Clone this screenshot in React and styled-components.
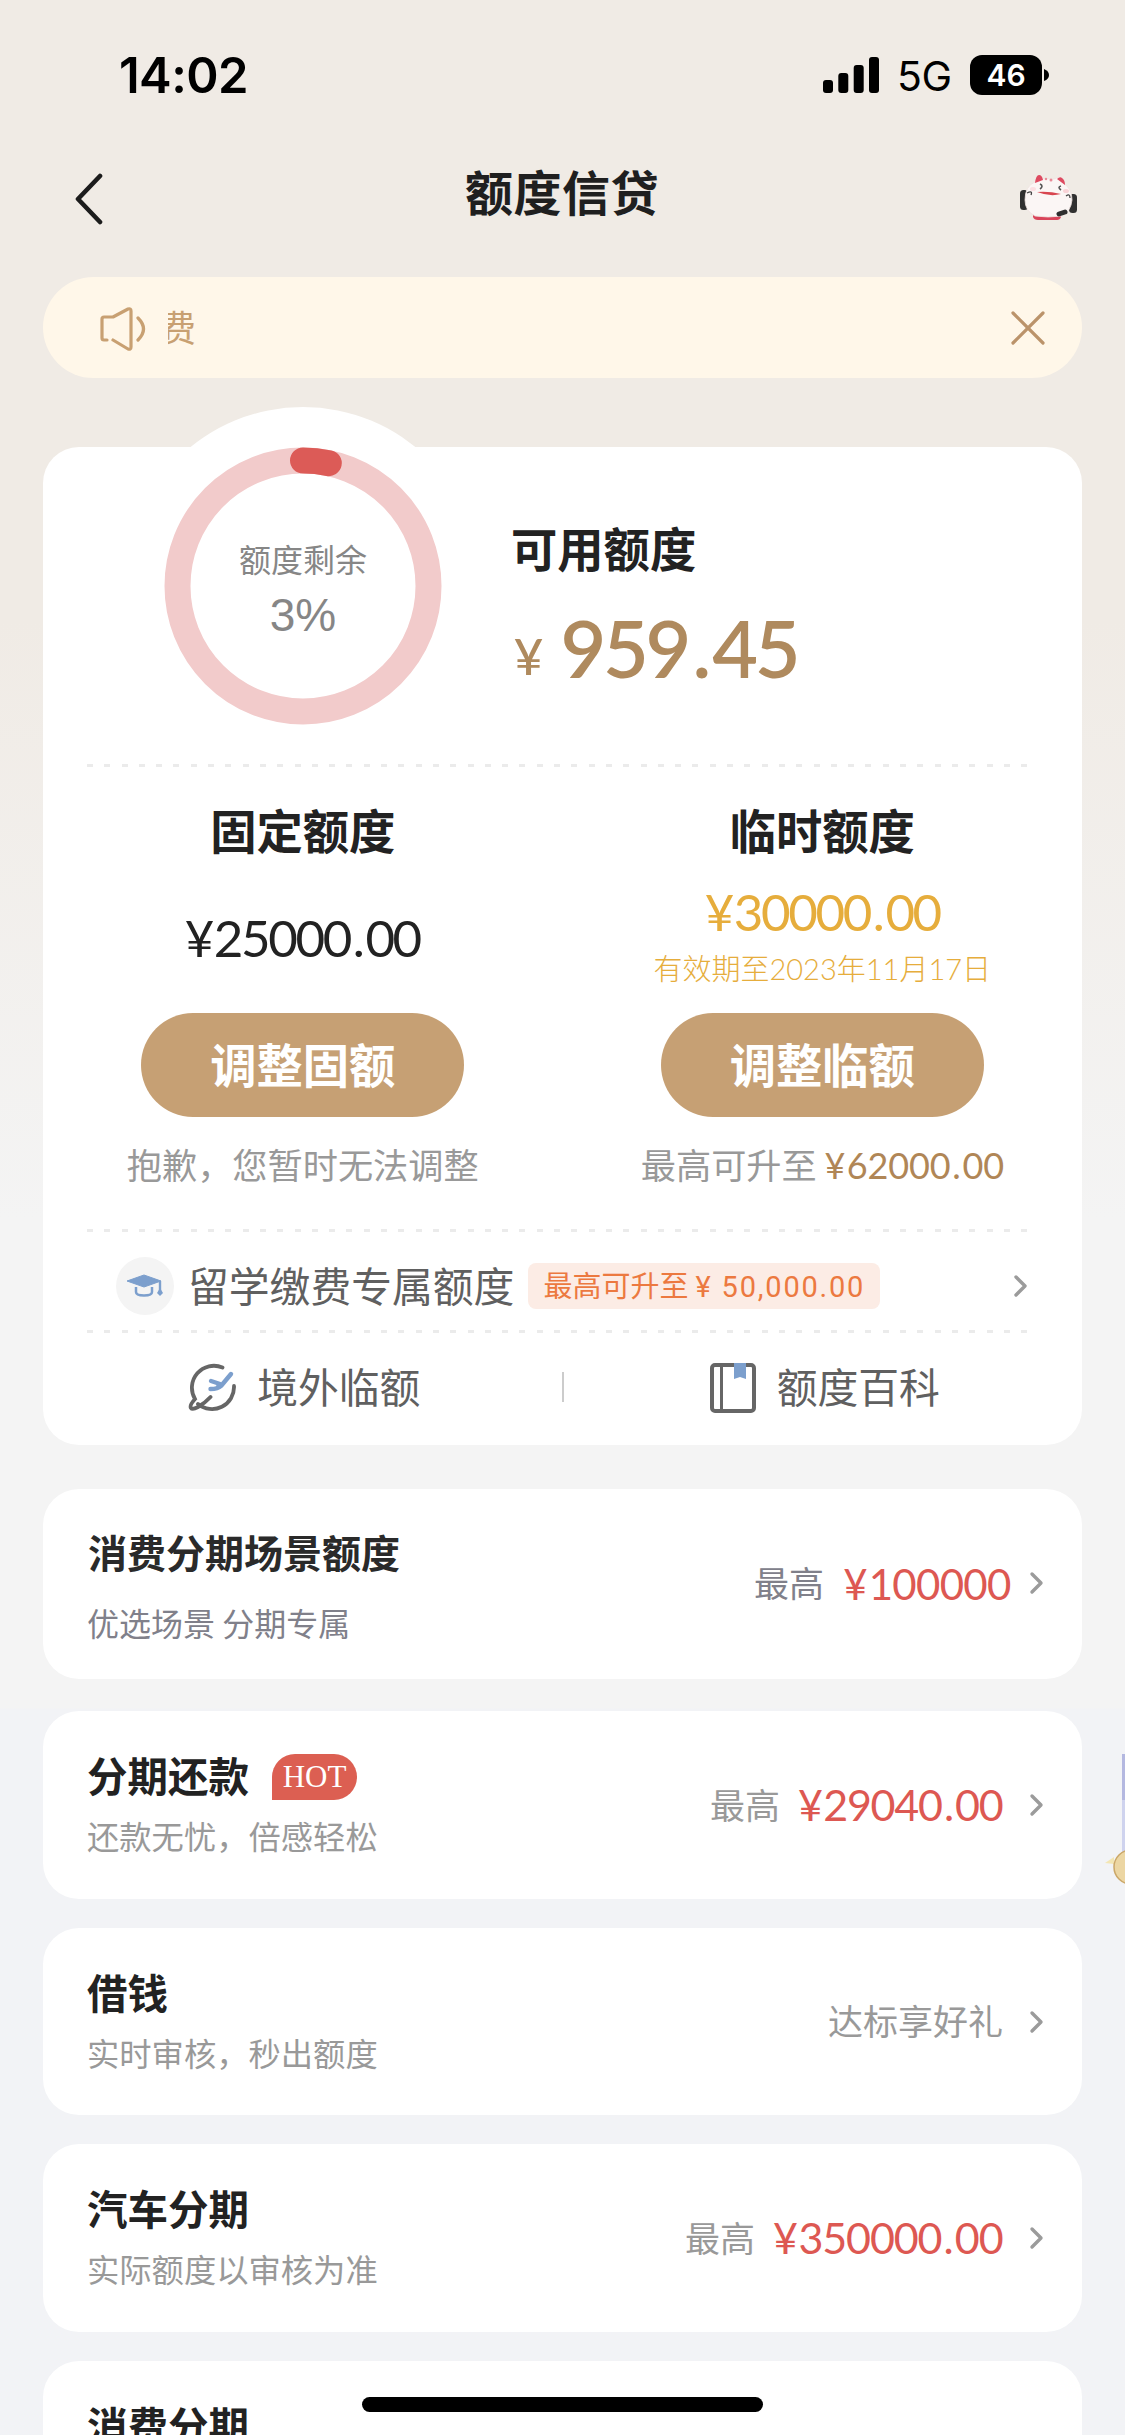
import React from 'react';
import styled, { createGlobalStyle } from 'styled-components';

const GlobalStyle = createGlobalStyle`
    * {
        box-sizing: border-box;
    }

    body {
        margin: 0;
        background: #f2f3f6;
        font-family: "Noto Sans CJK SC", sans-serif;
    }

    svg {
        display: block;
        flex-shrink: 0;
    }
`;

const offers = [
    { title: '分期还款', note: '还款无忧，倍感轻松', hot: true, prefix: '最高', amount: '¥29040.00', width: 206 },
    { title: '借钱', note: '实时审核，秒出额度', perk: '达标享好礼' },
    { title: '汽车分期', note: '实际额度以审核为准', prefix: '最高', amount: '¥350000.00', width: 231 },
    { title: '消费分期', note: '' },
];

const Chevron = () => (
    <svg width="16" height="24" viewBox="0 0 16 24" fill="none">
        <path d="M3 3 L12 12 L3 21" stroke="#9b9b9b" strokeWidth="3.4" strokeLinecap="round" strokeLinejoin="round" />
    </svg>
);

// Spreads the characters of an amount over a fixed width: digits take one cell,
// the currency sign a little more, the decimal point a little over half
const Figure = ({ children, width, size, weight = 400, color }) => {
    const cells = [...children].map((char) => (char === '¥' ? 1.14 : char === '.' ? 0.57 : 1));
    const unit = width / cells.reduce((a, b) => a + b, 0);
    let left = 0;
    const centers = cells.map((cell) => {
        left += cell * unit;
        return left - (cell * unit) / 2;
    });

    return (
        <svg width={width} height={size} overflow="visible">
            <text
                x={centers.join(' ')}
                y={size * 0.86}
                textAnchor="middle"
                fontFamily="Lato, sans-serif"
                fontSize={size}
                fontWeight={weight}
                fill={color}
            >
                {children}
            </text>
        </svg>
    );
};

const Mascot = () => (
    <svg width="60" height="50" viewBox="0 0 60 50">
        <rect x="0" y="16" width="8" height="20" rx="3.500" fill="#303030" />
        <rect x="49" y="20" width="8" height="19" rx="3.500" fill="#303030" />
        <path d="M13 40 H41 V43 Q40 46 37 46 H18 Q14 46 13 43 Z" fill="#d9445a" />
        <path d="M5 26 Q5 12 15 8 L20 3 L25 5 Q29 4 34 5 L39 3 L43 9 Q52 14 52 26 Q51 37 42 42 Q28 44 15 42 Q5 37 5 26 Z" fill="#fbf6f5" stroke="#efe2e0" strokeWidth="0.8" />
        <path d="M15 9 Q16 1 19 1 Q22 1 23 6 Z" fill="#de4a60" />
        <path d="M37 5 Q40 2 42 4 Q45 6 45 11 Z" fill="#de4a60" />
        <circle cx="26" cy="5" r="1.200" fill="#e88a97" />
        <circle cx="31" cy="6" r="1.500" fill="#e88a97" />
        <path d="M17 18 Q29 17 41 20 Q30 23 17 18 Z" fill="#d8454f" />
        <path d="M20 10 q4 2 0 5 M41 12 q-4 1 0 4" stroke="#555" strokeWidth="1.6" fill="none" />
        <path d="M7 19 q6 -3 4 2 M46 22 q4 -3 4 2" stroke="#444" strokeWidth="1.3" fill="none" />
        <ellipse cx="46" cy="17" rx="3" ry="2" fill="#f9d3d7" />
        <ellipse cx="13" cy="15" rx="3" ry="2" fill="#fbdfe2" />
        <path d="M39 40 L45 38" stroke="#2e2e2e" strokeWidth="5" strokeLinecap="round" />
    </svg>
);

const App = () => {
    return (
        <Page>
            <GlobalStyle />
            <StatusBar>
                <Clock>14:02</Clock>
                <Signals>
                    <svg width="56" height="36" viewBox="0 0 56 36">
                        <rect x="0" y="23" width="10" height="13" rx="3" />
                        <rect x="15.3" y="16" width="10" height="20" rx="3" />
                        <rect x="30.7" y="8" width="10" height="28" rx="3" />
                        <rect x="46" y="0" width="10" height="36" rx="3" />
                    </svg>
                    <Network>5G</Network>
                    <Battery>46</Battery>
                    <svg width="5" height="12" viewBox="0 0 5 12">
                        <path d="M0 0 Q5 2 5 6 Q5 10 0 12 Z" />
                    </svg>
                </Signals>
            </StatusBar>

            <NavBar>
                <svg width="30" height="52" viewBox="0 0 30 52" fill="none">
                    <path d="M26 3 L4 26 L26 49" stroke="#1c1c1c" strokeWidth="4.6" strokeLinecap="round" strokeLinejoin="round" />
                </svg>
                <NavTitle>额度信贷</NavTitle>
                <Mascot />
            </NavBar>

            <Notice>
                <svg width="48" height="46" viewBox="0 0 48 46" fill="none" stroke="#c8a072" strokeWidth="3.2" strokeLinecap="round" strokeLinejoin="round">
                    <path d="M9 35 H6 Q4 35 4 33 V14 Q4 12 6 12 H15 L30 4 Q33 3 33 6 V42 Q33 45 30 44 L15 35" />
                    <path d="M40 13 Q51 24 40 35" />
                </svg>
                <Marquee><span>费</span></Marquee>
                <svg width="34" height="34" viewBox="0 0 34 34">
                    <path d="M2 2 L32 32 M32 2 L2 32" stroke="#bb936a" strokeWidth="3.2" strokeLinecap="round" />
                </svg>
            </Notice>

            <LimitCard>
                <Bump />
                <Summary>
                    <Gauge>
                        <svg width="278" height="278" viewBox="0 0 278 278" fill="none">
                            <circle cx="139" cy="139" r="125.5" stroke="#f2cbcb" strokeWidth="26" />
                            <circle
                                cx="139"
                                cy="139"
                                r="125.5"
                                stroke="#dc5b57"
                                strokeWidth="26"
                                strokeLinecap="round"
                                pathLength="100"
                                strokeDasharray="3.3 96.7"
                                transform="rotate(-90 139 139)"
                            />
                        </svg>
                        <GaugeText>
                            <GaugeLabel>额度剩余</GaugeLabel>
                            <GaugeValue>3%</GaugeValue>
                        </GaugeText>
                    </Gauge>
                    <Available>
                        <Heading>可用额度</Heading>
                        <AvailableSum>
                            <Figure width={27} size={51} weight={500} color="#af8a5e">¥</Figure>
                            <Figure width={237} size={79} weight={600} color="#af8a5e">959.45</Figure>
                        </AvailableSum>
                    </Available>
                </Summary>
                <Dashes />
                <Columns>
                    <Column>
                        <Heading>固定额度</Heading>
                        <SumBox>
                            <Figure width={237} size={51} color="#222">¥25000.00</Figure>
                        </SumBox>
                        <PillButton>调整固额</PillButton>
                        <Hint>抱歉，您暂时无法调整</Hint>
                    </Column>
                    <Column>
                        <Heading>临时额度</Heading>
                        <SumBox>
                            <Figure width={237} size={51} color="#e6ad3c">¥30000.00</Figure>
                            <Expiry>有效期至<b>2023</b>年<b>11</b>月<b>17</b>日</Expiry>
                        </SumBox>
                        <PillButton>调整临额</PillButton>
                        <Hint>
                            最高可升至
                            <Figure width={181} size={36} color="#b08656">¥62000.00</Figure>
                        </Hint>
                    </Column>
                </Columns>
                <Dashes />
                <StudyRow>
                    <RoundIcon>
                        <svg width="38" height="24" viewBox="0 0 38 24">
                            <path d="M1 7 L18 1 L35 7 L18 13 Z" fill="#7c9fcd" stroke="#7c9fcd" strokeLinejoin="round" />
                            <path d="M10 13 V18 Q10 21.500 18 21.500 Q26 21.500 26 18 V13" stroke="#7c9fcd" strokeWidth="2.5" fill="none" />
                            <path d="M34 7 V17" stroke="#7c9fcd" strokeWidth="2.4" />
                            <path d="M34 14 L37 19 L34 22 L31 19 Z" fill="#7c9fcd" />
                        </svg>
                    </RoundIcon>
                    <LinkText>留学缴费专属额度</LinkText>
                    <Tag>最高可升至<i>¥ 50,000.00</i></Tag>
                    <Chevron />
                </StudyRow>
                <Dashes />
                <Shortcuts>
                    <Shortcut>
                        <svg width="48" height="50" viewBox="0 0 48 50" fill="none" stroke="#666" strokeWidth="3.8" strokeLinecap="round">
                            <path d="M34.500 4.500 A22 22 0 0 0 7 36 C-1 45 3 48 10 44 Q17 40 22.500 34" />
                            <path d="M10 41 A22 22 0 0 0 46 23" />
                            <path
                                d="M43 11 L33 23 Q30 26 22.500 26 M32 21 L23 18 M32 21 L29 25"
                                stroke="#7c9fcd"
                                strokeWidth="4.4"
                                strokeLinejoin="round"
                            />
                        </svg>
                        <LinkText>境外临额</LinkText>
                    </Shortcut>
                    <Divider />
                    <Shortcut>
                        <svg width="46" height="50" viewBox="0 0 46 50" fill="none">
                            <rect x="2" y="2" width="42" height="46" rx="3" stroke="#666" strokeWidth="4" />
                            <path d="M11.500 2 V48" stroke="#666" strokeWidth="3" />
                            <path d="M24 0 H36 V16 L30 14 L24 16 Z" fill="#7c9fcd" />
                        </svg>
                        <LinkText>额度百科</LinkText>
                    </Shortcut>
                </Shortcuts>
            </LimitCard>

            <SceneCard>
                <div>
                    <SceneTitle>消费分期场景额度</SceneTitle>
                    <SceneNote>优选场景 分期专属</SceneNote>
                </div>
                <Side $tint="#80808a">
                    <SideLabel>最高</SideLabel>
                    <SceneSum>
                        <Figure width={169} size={42} color="#dd5852">¥100000</Figure>
                    </SceneSum>
                    <Chevron />
                </Side>
            </SceneCard>

            <OfferList>
                {offers.map((offer) => (
                    <OfferCard key={offer.title}>
                        <div>
                            <OfferTitle>
                                {offer.title}
                                {offer.hot && <Hot>HOT</Hot>}
                            </OfferTitle>
                            <OfferNote>{offer.note}</OfferNote>
                        </div>
                        <Side $tint="#999">
                            <SideLabel>{offer.prefix || offer.perk}</SideLabel>
                            <OfferSum>
                                {offer.amount && (
                                    <Figure width={offer.width} size={43} color="#dd5852">{offer.amount}</Figure>
                                )}
                            </OfferSum>
                            <Chevron />
                        </Side>
                    </OfferCard>
                ))}
            </OfferList>

            <FloatingAd width="20" height="140" viewBox="0 0 20 140">
                <rect x="17" y="4" width="3" height="46" fill="#b4b8e0" />
                <rect x="17" y="50" width="3" height="55" fill="#cfd3ee" />
                <path d="M0 113 L9 107 L9 114 Z" fill="#f3e6b4" />
                <circle cx="26" cy="117" r="17" fill="#ecd6a3" stroke="#cba768" strokeWidth="1.5" />
            </FloatingAd>
            <HomeIndicator />
        </Page>
    );
};

const Page = styled.div`
    position: relative;
    width: 1125px;
    height: 2435px;
    overflow: hidden;
    background: linear-gradient(180deg, #f0ebe5 0, #f0ebe5 620px, #f4f4f4 1220px, #f4f4f4 1708px, #f2f3f6 1709px);
`;

const StatusBar = styled.div`
    display: flex;
    justify-content: space-between;
    align-items: center;
    height: 150px;
    padding: 0 76px 0 119px;
    font-family: Inter, sans-serif;
`;

const Clock = styled.div`
    font-size: 49px;
    font-weight: 600;
    letter-spacing: -0.6px;
`;

const Signals = styled.div`
    display: flex;
    align-items: center;
`;

const Network = styled.div`
    width: 55px;
    margin: 2px 18px 0 18px;
    font-size: 41px;
    letter-spacing: -0.5px;
`;

const Battery = styled.div`
    width: 72px;
    height: 40px;
    margin-right: 2px;
    border-radius: 12px;
    background: #000;
    color: #fff;
    font-size: 30px;
    font-weight: 600;
    line-height: 40px;
    text-align: center;
`;

const NavBar = styled.div`
    display: flex;
    justify-content: space-between;
    align-items: center;
    height: 98px;
    padding: 0 45px 0 74px;
`;

const NavTitle = styled.h1`
    margin: 0 0 19px 0;
    font-size: 48px;
    font-weight: 700;
    line-height: 60px;
    letter-spacing: 0.5px;
    color: #1f1f1f;
`;

const Notice = styled.div`
    display: flex;
    align-items: center;
    height: 101px;
    margin: 29px 43px 0;
    padding: 0 37px 0 55px;
    border-radius: 51px;
    background: #fff7e9;
`;

const Marquee = styled.div`
    display: flex;
    flex: 1;
    overflow: hidden;
    margin: -4px 0 0 22px;
    font-size: 36px;
    line-height: 52px;
    color: #c8a072;

    span {
        margin-left: -8px;
    }
`;

const LimitCard = styled.section`
    position: relative;
    height: 998px;
    margin: 69px 43px 0;
    border-radius: 36px;
    background: #fff;
`;

const Bump = styled.div`
    position: absolute;
    top: -40px;
    left: 82px;
    width: 356px;
    height: 356px;
    border-radius: 50%;
    background: #fff;
`;

const Summary = styled.div`
    position: relative;
    display: flex;
    height: 317px;
    padding-left: 121px;
`;

const Gauge = styled.div`
    position: relative;
    width: 278px;
    height: 278px;
`;

const GaugeText = styled.div`
    position: absolute;
    inset: 0;
    padding-top: 87px;
    text-align: center;
    color: #868686;
`;

const GaugeLabel = styled.div`
    font-size: 32px;
    line-height: 48px;
`;

const GaugeValue = styled.div`
    margin-top: 3px;
    font-family: "Liberation Sans", sans-serif;
    font-size: 46px;
    line-height: 60px;
`;

const Available = styled.div`
    padding: 70px 0 0 69px;
`;

const Heading = styled.h2`
    margin: 0;
    font-size: 46.300px;
    font-weight: 700;
    line-height: 60px;
    color: #222;
`;

const AvailableSum = styled.div`
    display: flex;
    align-items: flex-end;
    gap: 20px;
    padding: 33px 0 0 4px;

    svg:first-child {
        margin-bottom: 7px;
    }
`;

const Dashes = styled.div`
    height: 3px;
    margin: 0 52px 0 44px;
    background: repeating-linear-gradient(90deg, #ebebeb 0 6px, transparent 6px 17.300px);
`;

const Columns = styled.div`
    display: grid;
    grid-template-columns: 1fr 1fr;
    height: 462px;
`;

const Column = styled.div`
    display: flex;
    flex-direction: column;
    align-items: center;
    padding-top: 32px;
`;

const SumBox = styled.div`
    display: flex;
    flex-direction: column;
    justify-content: center;
    align-items: center;
    height: 154px;
    padding-top: 5px;
`;

const Expiry = styled.div`
    margin-top: 7px;
    font-size: 29px;
    font-weight: 300;
    line-height: 44px;
    color: #e6ad3c;

    b {
        font-family: Lato, sans-serif;
        font-size: 29px;
        font-weight: 300;
    }
`;

const PillButton = styled.button`
    width: 323px;
    height: 104px;
    padding: 0 0 6px;
    border: none;
    border-radius: 52px;
    background: #c6a074;
    color: #fff;
    font-family: inherit;
    font-size: 46.300px;
    font-weight: 700;
`;

const Hint = styled.div`
    display: flex;
    align-items: center;
    gap: 6px;
    margin-top: 20px;
    font-size: 35.200px;
    line-height: 54px;
    color: #999;

    svg {
        margin-top: 4px;
    }
`;

const StudyRow = styled.div`
    display: flex;
    align-items: center;
    height: 98px;
    padding: 9px 53px 0 73px;

    > svg {
        margin-left: auto;
    }
`;

const RoundIcon = styled.div`
    display: flex;
    align-items: center;
    justify-content: center;
    width: 58px;
    height: 58px;
    border-radius: 50%;
    background: #f4f4f4;
`;

const LinkText = styled.div`
    font-size: 40.800px;
    line-height: 60px;
    color: #606060;

    ${RoundIcon} + & {
        margin: -2px 0 0 14px;
    }
`;

const Tag = styled.div`
    height: 46px;
    width: 352px;
    margin-left: 14px;
    border-radius: 8px;
    background: #fcece5;
    color: #ec7940;
    font-size: 29px;
    line-height: 43px;
    text-align: center;
    white-space: nowrap;

    i {
        margin-left: 7px;
        font-family: Roboto, sans-serif;
        font-style: normal;
        letter-spacing: 1.800px;
    }
`;

const Shortcuts = styled.div`
    display: grid;
    grid-template-columns: 1fr 2px 1fr;
    align-items: center;
    height: 112px;
    padding-bottom: 4px;
`;

const Shortcut = styled.div`
    display: flex;
    align-items: center;
    justify-content: center;
    gap: 21px;
    padding: 2px 0 0 4px;

    ${LinkText} {
        margin-top: -4px;
    }
`;

const Divider = styled.div`
    height: 30px;
    background: #ccc;
`;

const Card = styled.section`
    display: flex;
    justify-content: space-between;
    border-radius: 36px;
    background: #fff;
`;

const SceneCard = styled(Card)`
    height: 190px;
    margin: 44px 43px 0;
    padding: 32px 37px 0 45px;
`;

const SceneTitle = styled.h3`
    margin: 0;
    font-size: 39px;
    font-weight: 700;
    line-height: 60px;
    color: #2a2a2a;
`;

const SceneNote = styled.p`
    margin: 17px 0 0 -1px;
    font-size: 32px;
    line-height: 48px;
    color: #80808a;
`;

const OfferList = styled.div`
    display: flex;
    flex-direction: column;
    gap: 29px;
    margin: 32px 43px 0;
`;

const OfferCard = styled(Card)`
    flex-shrink: 0;
    height: 187.500px;
    padding: 34px 37px 0 44px;
`;

const OfferTitle = styled.h3`
    display: flex;
    align-items: center;
    margin: 0;
    font-size: 40.500px;
    font-weight: 700;
    line-height: 60px;
    color: #222;
`;

const Hot = styled.span`
    width: 85px;
    height: 46px;
    margin: 3px 0 0 23px;
    border-radius: 23px 23px 23px 0;
    background: #dc5f52;
    color: #fff;
    font-family: "Liberation Serif", serif;
    font-size: 31px;
    font-weight: 400;
    line-height: 46px;
    text-align: center;
`;

const OfferNote = styled.p`
    margin: 8px 0 0;
    font-size: 32.300px;
    line-height: 44px;
    color: #999;
`;

const Side = styled.div`
    display: flex;
    align-items: center;
    height: 60px;
    margin-top: 30px;
    color: ${(props) => props.$tint};

    ${SceneCard} & {
        margin-top: 32px;
    }
`;

const SideLabel = styled.div`
    margin-top: -3px;
    font-size: 35px;
    line-height: 56px;
`;

const SceneSum = styled.div`
    margin: 3px 18px 0 18px;
`;

const OfferSum = styled.div`
    margin-right: 26px;

    svg {
        margin-left: 17px;
    }
`;

const FloatingAd = styled.svg`
    position: absolute;
    right: 0;
    top: 1750px;
`;

const HomeIndicator = styled.div`
    position: absolute;
    left: 362px;
    bottom: 23px;
    width: 401px;
    height: 15px;
    border-radius: 8px;
    background: #000;
`;

export default App;
